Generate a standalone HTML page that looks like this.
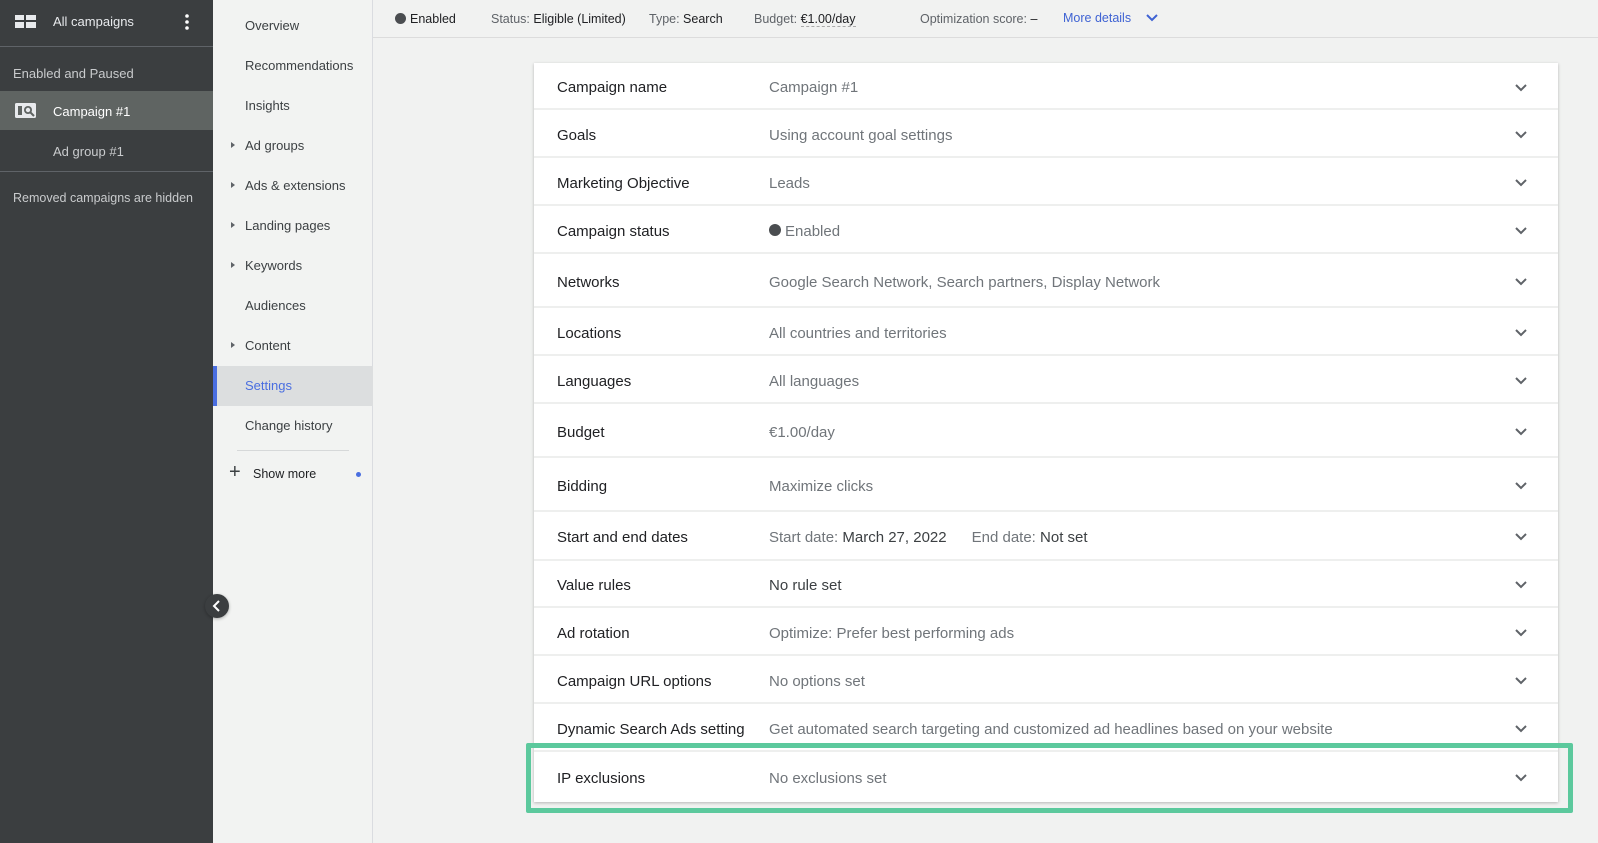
<!DOCTYPE html>
<html><head><meta charset="utf-8"><style>
*{box-sizing:border-box;margin:0;padding:0}
body{width:1598px;height:843px;overflow:hidden;background:#f1f2f1;font-family:"Liberation Sans",Arial,sans-serif;position:relative}
.a{position:absolute;white-space:nowrap}
#side{position:absolute;left:0;top:0;width:213px;height:843px;background:#3b3e40;color:#e8eaed;font-size:13px}
#nav{position:absolute;left:213px;top:0;width:160px;height:843px;background:#f2f3f2;border-right:1px solid #dadce0;font-size:13px;color:#3c4043}
#top{position:absolute;left:373px;top:0;width:1225px;height:38px;border-bottom:1px solid #dcdcdc;font-size:12.5px;color:#5f6368}
#top b{font-weight:normal;color:#202124}
#card{position:absolute;left:534px;top:63px;width:1024px;height:739px;background:#fff;box-shadow:0 1px 3px rgba(0,0,0,.25)}
.row{position:absolute;left:0;width:1024px;border-bottom:2px solid #eeefee;font-size:15px}
.row .l{position:absolute;left:23px;color:#202124;margin-top:2px}
.row .v{position:absolute;left:235px;color:#70757a;margin-top:2px}
.tri{position:absolute;left:18px;width:0;height:0;border-left:4px solid #5f6368;border-top:3.5px solid transparent;border-bottom:3.5px solid transparent}
</style></head><body>
<div id="side">
 <svg class="a" style="left:15px;top:15px" width="21" height="13"><rect x="0" y="0" width="9" height="5" fill="#e8eaed"/><rect x="11" y="0" width="10" height="5" fill="#e8eaed"/><rect x="0" y="7" width="9" height="6" fill="#e8eaed"/><rect x="11" y="7" width="10" height="6" fill="#e8eaed"/></svg>
 <div class="a" style="left:53px;top:14px">All campaigns</div>
 <svg class="a" style="left:185px;top:14px" width="4" height="16"><circle cx="2" cy="2" r="1.8" fill="#fff"/><circle cx="2" cy="8" r="1.8" fill="#fff"/><circle cx="2" cy="14" r="1.8" fill="#fff"/></svg>
 <div class="a" style="left:0;top:46px;width:213px;border-top:1px solid #5f6368"></div>
 <div class="a" style="left:13px;top:66px;color:#c9cbcd">Enabled and Paused</div>
 <div class="a" style="left:0;top:91px;width:213px;height:39px;background:#5f6462"></div>
 <svg class="a" style="left:15px;top:103px" width="22" height="15"><rect x="0" y="0" width="21" height="15" rx="1.5" fill="#e8eaed"/><rect x="3" y="3" width="4" height="9" fill="#5f6462"/><circle cx="13" cy="7" r="4" fill="#5f6462"/><circle cx="13" cy="7" r="2.2" fill="#e8eaed"/><path d="M15.5 9.5l3.5 3.5" stroke="#5f6462" stroke-width="2"/></svg>
 <div class="a" style="left:53px;top:104px;color:#fff">Campaign #1</div>
 <div class="a" style="left:53px;top:144px;color:#c9cbcd">Ad group #1</div>
 <div class="a" style="left:0;top:171px;width:213px;border-top:1px solid #5f6368"></div>
 <div class="a" style="left:13px;top:191px;color:#c9cbcd;font-size:12.5px">Removed campaigns are hidden</div>
</div>
<div id="nav">
 <div class="a" style="left:32px;top:18px">Overview</div>
 <div class="a" style="left:32px;top:58px">Recommendations</div>
 <div class="a" style="left:32px;top:98px">Insights</div>
 <div class="tri" style="top:142px"></div><div class="a" style="left:32px;top:138px">Ad groups</div>
 <div class="tri" style="top:182px"></div><div class="a" style="left:32px;top:178px">Ads &amp; extensions</div>
 <div class="tri" style="top:222px"></div><div class="a" style="left:32px;top:218px">Landing pages</div>
 <div class="tri" style="top:262px"></div><div class="a" style="left:32px;top:258px">Keywords</div>
 <div class="a" style="left:32px;top:298px">Audiences</div>
 <div class="tri" style="top:342px"></div><div class="a" style="left:32px;top:338px">Content</div>
 <div class="a" style="left:0;top:366px;width:160px;height:40px;background:#dcdedf;border-left:4px solid #4a6ee0"></div>
 <div class="a" style="left:32px;top:378px;color:#4a6ee0">Settings</div>
 <div class="a" style="left:32px;top:418px">Change history</div>
 <div class="a" style="left:24px;top:450px;width:112px;border-top:1px solid #d6d8d9"></div>
 <div class="a" style="left:16px;top:464px;font-size:20px;line-height:16px;color:#3c4043">+</div>
 <div class="a" style="left:40px;top:467px;font-size:12.5px;color:#202124">Show more</div>
 <div class="a" style="left:143px;top:472px;width:5px;height:5px;border-radius:50%;background:#4a6ee0"></div>
</div>
<div class="a" style="left:205px;top:594px;width:24px;height:24px;border-radius:50%;background:#3b3e40;box-shadow:0 1px 3px rgba(0,0,0,.3)"><svg width="24" height="24"><path d="M14 7l-5 5 5 5" stroke="#fff" stroke-width="2" fill="none"/></svg></div>
<div id="top">
 <div class="a" style="left:22px;top:13px;width:11px;height:11px;border-radius:50%;background:#4a4d50"></div>
 <div class="a" style="left:37px;top:12px;color:#202124">Enabled</div>
 <div class="a" style="left:118px;top:12px">Status: <b>Eligible (Limited)</b></div>
 <div class="a" style="left:276px;top:12px">Type: <b>Search</b></div>
 <div class="a" style="left:381px;top:12px">Budget: <b style="border-bottom:1px dashed #aaa">€1.00/day</b></div>
 <div class="a" style="left:547px;top:12px">Optimization score: <b>–</b></div>
 <div class="a" style="left:690px;top:11px;color:#3f63d3">More details</div>
 <svg class="a" style="left:772px;top:13px" width="14" height="10"><path d="M2 2l5 5 5-5" stroke="#3f63d3" stroke-width="2" fill="none"/></svg>
</div>
<div id="card">
 <div class="row" style="top:0;height:47px"><span class="l" style="top:14px">Campaign name</span><span class="v" style="top:14px">Campaign #1</span></div>
 <div class="row" style="top:47px;height:48px"><span class="l" style="top:15px">Goals</span><span class="v" style="top:15px">Using account goal settings</span></div>
 <div class="row" style="top:95px;height:48px"><span class="l" style="top:15px">Marketing Objective</span><span class="v" style="top:15px">Leads</span></div>
 <div class="row" style="top:143px;height:48px"><span class="l" style="top:15px">Campaign status</span><span class="v" style="top:15px"><span style="display:inline-block;width:12px;height:12px;border-radius:50%;background:#4a4d50;margin-right:4px"></span>Enabled</span></div>
 <div class="row" style="top:191px;height:54px"><span class="l" style="top:18px">Networks</span><span class="v" style="top:18px">Google Search Network, Search partners, Display Network</span></div>
 <div class="row" style="top:245px;height:48px"><span class="l" style="top:15px">Locations</span><span class="v" style="top:15px">All countries and territories</span></div>
 <div class="row" style="top:293px;height:48px"><span class="l" style="top:15px">Languages</span><span class="v" style="top:15px">All languages</span></div>
 <div class="row" style="top:341px;height:54px"><span class="l" style="top:18px">Budget</span><span class="v" style="top:18px">€1.00/day</span></div>
 <div class="row" style="top:395px;height:54px"><span class="l" style="top:18px">Bidding</span><span class="v" style="top:18px">Maximize clicks</span></div>
 <div class="row" style="top:449px;height:49px"><span class="l" style="top:15px">Start and end dates</span><span class="v" style="top:15px">Start date: <span style="color:#3c4043">March 27, 2022</span>&nbsp;&nbsp;&nbsp;&nbsp;&nbsp;&nbsp;End date: <span style="color:#3c4043">Not set</span></span></div>
 <div class="row" style="top:498px;height:47px"><span class="l" style="top:14px">Value rules</span><span class="v" style="top:14px;color:#3c4043">No rule set</span></div>
 <div class="row" style="top:545px;height:48px"><span class="l" style="top:15px">Ad rotation</span><span class="v" style="top:15px">Optimize: Prefer best performing ads</span></div>
 <div class="row" style="top:593px;height:48px"><span class="l" style="top:15px">Campaign URL options</span><span class="v" style="top:15px">No options set</span></div>
 <div class="row" style="top:641px;height:48px"><span class="l" style="top:15px">Dynamic Search Ads setting</span><span class="v" style="top:15px">Get automated search targeting and customized ad headlines based on your website</span></div>
 <div class="row" style="top:689px;height:50px;border-bottom:none"><span class="l" style="top:16px">IP exclusions</span><span class="v" style="top:16px">No exclusions set</span></div>
</div>
<svg class="a" style="left:1514px;top:65px" width="14" height="739">
 <g stroke="#5f6368" stroke-width="2" fill="none">
 <path d="M2 20l5 5 5-5"/><path d="M2 67l5 5 5-5"/><path d="M2 115l5 5 5-5"/><path d="M2 163l5 5 5-5"/><path d="M2 214l5 5 5-5"/><path d="M2 265l5 5 5-5"/><path d="M2 313l5 5 5-5"/><path d="M2 364l5 5 5-5"/><path d="M2 418l5 5 5-5"/><path d="M2 469l5 5 5-5"/><path d="M2 517l5 5 5-5"/><path d="M2 565l5 5 5-5"/><path d="M2 613l5 5 5-5"/><path d="M2 661l5 5 5-5"/><path d="M2 710l5 5 5-5"/>
 </g>
</svg>
<div class="a" style="left:526px;top:743px;width:1047px;height:70px;border:5px solid #5cc99d;border-radius:2px"></div>
</body></html>
